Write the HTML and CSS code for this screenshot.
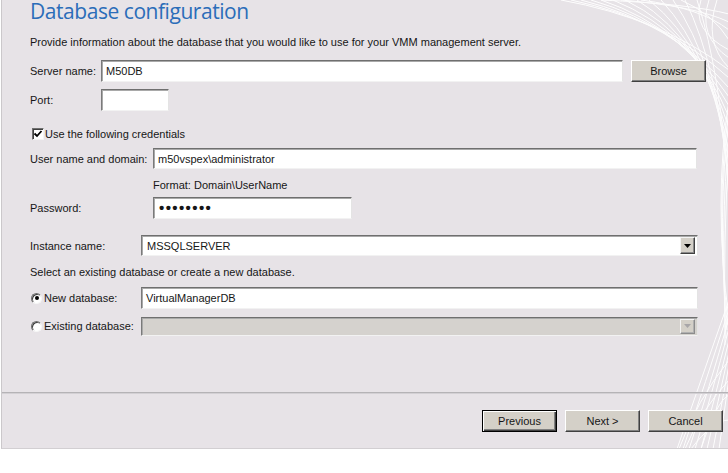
FILE: index.html
```html
<!DOCTYPE html>
<html>
<head>
<meta charset="utf-8">
<link rel="stylesheet" href="styles.css">
</head>
<body>
<div class="dialog">
  <svg class="deco" width="200" height="449" viewBox="528 0 200 449" aria-hidden="true">
    <g fill="none" stroke="#ffffff" stroke-width="1" opacity="0.95">
      <path d="M560 0 Q660 18 728 70"/>
      <path d="M570 0 Q665 20 728 78"/>
      <path d="M580 0 Q672 23 728 88"/>
      <path d="M590 0 Q680 26 728 97"/>
      <path d="M600 0 Q686 29 728 106"/>
      <path d="M612 0 Q694 33 728 117"/>
      <path d="M624 0 Q700 37 728 128"/>
      <path d="M636 0 Q704 42 728 140"/>
      <path d="M648 0 Q708 48 728 152"/>
      <path d="M660 0 Q711 54 728 164"/>
      <path d="M672 0 Q714 60 728 176"/>
      <path d="M684 0 Q717 66 728 188"/>
      <path d="M696 0 Q720 72 728 200"/>
      <path d="M700 0 Q690 30 728 50"/>
      <path d="M708 0 Q696 36 728 58"/>
      <path d="M716 0 Q702 42 728 68"/>
      <path d="M640 0 Q700 8 728 30"/>
      <path d="M620 0 Q694 6 728 22"/>
      <path d="M600 0 Q690 4 728 14"/>
      <path d="M680 0 Q712 14 728 40"/>
      <path d="M728 100 Q712 200 728 320"/>
      <path d="M728 110 Q714 205 727 325"/>
      <path d="M728 120 Q716 210 726 330"/>
      <path d="M728 135 Q719 225 725 338"/>
      <path d="M728 150 Q722 235 724 345"/>
      <path d="M676 449 Q700 380 728 300"/>
      <path d="M682 449 Q704 384 728 309"/>
      <path d="M688 449 Q708 389 728 318"/>
      <path d="M694 449 Q711 394 728 328"/>
      <path d="M700 449 Q714 398 728 340"/>
      <path d="M706 449 Q717 403 728 352"/>
      <path d="M712 449 Q720 408 728 365"/>
      <path d="M718 449 Q723 414 728 378"/>
      <path d="M690 449 Q712 420 728 420"/>
      <path d="M700 449 Q716 400 728 395"/>
      <path d="M684 449 Q700 410 728 380"/>
      <path d="M678 449 Q696 400 728 360"/>
    </g>
  </svg>

  <div class="main">
    <h1 class="title">Database configuration</h1>
    <p class="desc">Provide information about the database that you would like to use for your VMM management server.</p>

    <div class="row r-server">
      <span class="lbl w-server">Server name:</span>
      <div class="field f-server">M50DB</div>
      <button class="btn b-browse">Browse</button>
    </div>

    <div class="row r-port">
      <span class="lbl w-server">Port:</span>
      <div class="field f-port"></div>
    </div>

    <div class="row r-check">
      <span class="checkbox">
        <svg width="10" height="10" viewBox="0 0 10 10"><path d="M1.5 4.5 L4 7 L8.5 2" fill="none" stroke="#000" stroke-width="1.8"/></svg>
      </span>
      <span class="chk-label">Use the following credentials</span>
    </div>

    <div class="row r-user">
      <span class="lbl w-user">User name and domain:</span>
      <div class="field f-user">m50vspex\administrator</div>
    </div>

    <div class="row r-format">
      <span class="lbl w-user"></span>
      <span class="hint">Format: Domain\UserName</span>
    </div>

    <div class="row r-pass">
      <span class="lbl w-user">Password:</span>
      <div class="field f-pass"><span class="dots">••••••••</span></div>
    </div>

    <div class="row r-inst">
      <span class="lbl w-inst">Instance name:</span>
      <div class="field f-select">
        <span class="sel-text">MSSQLSERVER</span>
        <span class="arrow"><svg width="7" height="4" viewBox="0 0 7 4"><path d="M0 0 H7 L3.5 4 Z" fill="#000"/></svg></span>
      </div>
    </div>

    <p class="desc r-sel">Select an existing database or create a new database.</p>

    <div class="row r-new">
      <span class="radio-wrap w-inst">
        <span class="radio on"></span>
        <span class="radio-label">New database:</span>
      </span>
      <div class="field f-wide">VirtualManagerDB</div>
    </div>

    <div class="row r-exist">
      <span class="radio-wrap w-inst">
        <span class="radio"></span>
        <span class="radio-label">Existing database:</span>
      </span>
      <div class="field f-select disabled">
        <span class="sel-text"></span>
        <span class="arrow dis"><svg width="7" height="4" viewBox="0 0 7 4"><path d="M0 0 H7 L3.5 4 Z" fill="#a8a6a8"/></svg></span>
      </div>
    </div>
  </div>

  <div class="footer">
    <button class="btn default">Previous</button>
    <button class="btn">Next &gt;</button>
    <button class="btn">Cancel</button>
  </div>
</div>
</body>
</html>
```

FILE: styles.css
```css
html, body {
  margin: 0;
  padding: 0;
  background: #ffffff;
}

body {
  width: 728px;
  height: 473px;
  overflow: hidden;
  font-family: "Liberation Sans", Arial, sans-serif;
  font-size: 11px;
  color: #161616;
}

.dialog {
  position: relative;
  margin-left: 1px;
  width: 727px;
  height: 448px;
  border-left: 1px solid #cbc8cb;
  border-bottom: 1px solid #d2cfd2;
  background: #e7e3e7;
  display: flex;
  flex-direction: column;
  overflow: hidden;
}

.deco {
  position: absolute;
  top: 0;
  right: 0;
  pointer-events: none;
}

.main {
  position: relative;
  height: 392px;
  padding-left: 28px;
  box-sizing: border-box;
  display: flex;
  flex-direction: column;
}

.title {
  margin: -1px 0 0 0;
  height: 24px;
  font-family: "Open Sans", "Noto Sans", sans-serif;
  font-weight: 400;
  font-size: 21px;
  line-height: 24px;
  color: #2b6db9;
  letter-spacing: -0.45px;
}

.desc {
  margin: 12px 0 0 0;
  height: 14px;
  line-height: 14px;
}

.row {
  display: flex;
  align-items: center;
}

.lbl {
  flex: none;
}

.w-server { width: 71px; }
.w-user { width: 123px; }
.w-inst { width: 111px; }

.field {
  box-sizing: border-box;
  background: #ffffff;
  border-style: solid;
  border-width: 1px;
  border-color: #6f6f6f #e4e4e4 #f2f2f2 #7a7a7a;
  box-shadow: inset 1px 1px 0 #a9a9a9;
  padding-left: 4px;
  display: flex;
  align-items: center;
  height: 22px;
}

.r-server { margin-top: 10px; height: 23px; }
.f-server { width: 522px; }
.b-browse { margin-left: 8px; width: 75px; height: 23px; }

.r-port { margin-top: 7px; height: 22px; }
.f-port { width: 68px; }

.r-check { margin-top: 16px; height: 13px; }

.checkbox {
  box-sizing: border-box;
  width: 12px;
  height: 12px;
  margin-left: 2px;
  background: #fff;
  border-style: solid;
  border-width: 1px;
  border-color: #707070 #f4f4f4 #f4f4f4 #707070;
  box-shadow: inset 1px 1px 0 #404040;
  display: flex;
  align-items: center;
  justify-content: center;
}

.chk-label { margin-left: 1px; }

.r-user { margin-top: 8px; height: 21px; }
.f-user { width: 544px; height: 21px; }

.r-format { margin-top: 9px; height: 14px; }

.r-pass { margin-top: 5px; height: 22px; }
.f-pass { width: 199px; }

.dots {
  font-size: 15px;
  font-weight: bold;
  letter-spacing: 1.4px;
  line-height: 10px;
  margin-left: 1px;
}

.r-inst { margin-top: 16px; height: 21px; }

.f-select {
  width: 557px;
  height: 21px;
  padding-right: 2px;
  justify-content: space-between;
}

.sel-text { margin-left: 1px; }

.arrow {
  box-sizing: border-box;
  width: 15px;
  height: 17px;
  background: #d4d0c8;
  border-style: solid;
  border-width: 1px;
  border-color: #f4f4f4 #404040 #404040 #f4f4f4;
  box-shadow: inset -1px -1px 0 #8a8a8a;
  display: flex;
  align-items: center;
  justify-content: center;
}

.arrow.dis {
  border-color: #f4f4f4 #8c8c8c #8c8c8c #f4f4f4;
  box-shadow: inset -1px -1px 0 #b0b0b0;
}

.r-sel { margin-top: 9px; }

.r-new { margin-top: 8px; height: 22px; }
.f-wide { width: 557px; }

.r-exist { margin-top: 8px; height: 18px; }
.r-exist .f-select { height: 19px; }
.r-exist .arrow { height: 15px; }

.disabled {
  background: #d5d2ce;
}

.radio-wrap {
  display: flex;
  align-items: center;
  flex: none;
}

.radio {
  box-sizing: border-box;
  width: 11px;
  height: 11px;
  margin-left: 1px;
  border-radius: 50%;
  background: #ffffff;
  border-style: solid;
  border-width: 1px;
  border-color: #6d6d6d #f6f6f6 #f6f6f6 #6d6d6d;
  box-shadow: inset 1px 1px 0 #404040;
  display: flex;
  align-items: center;
  justify-content: center;
}

.radio.on::after {
  content: "";
  width: 4px;
  height: 4px;
  border-radius: 50%;
  background: #000;
}

.radio-label { margin-left: 2px; }

.btn {
  box-sizing: border-box;
  font-family: "Liberation Sans", Arial, sans-serif;
  font-size: 11px;
  color: #161616;
  background: #d4d0c8;
  border-style: solid;
  border-width: 1px;
  border-color: #ffffff #404040 #404040 #ffffff;
  box-shadow: inset -1px -1px 0 #808080;
  padding: 0;
  width: 75px;
  height: 22px;
}

.btn.default {
  border: 1px solid #000;
  box-shadow: inset 1px 1px 0 #ffffff, inset -1px -1px 0 #404040, inset -2px -2px 0 #808080;
}

.footer {
  position: relative;
  flex: 1;
  border-top: 1px solid #b5b3b6;
  box-shadow: inset 0 1px 0 #d3d0d4;
  display: flex;
  justify-content: flex-end;
  align-items: flex-start;
  gap: 8px;
  padding: 17px 6px 0 0;
}
```
